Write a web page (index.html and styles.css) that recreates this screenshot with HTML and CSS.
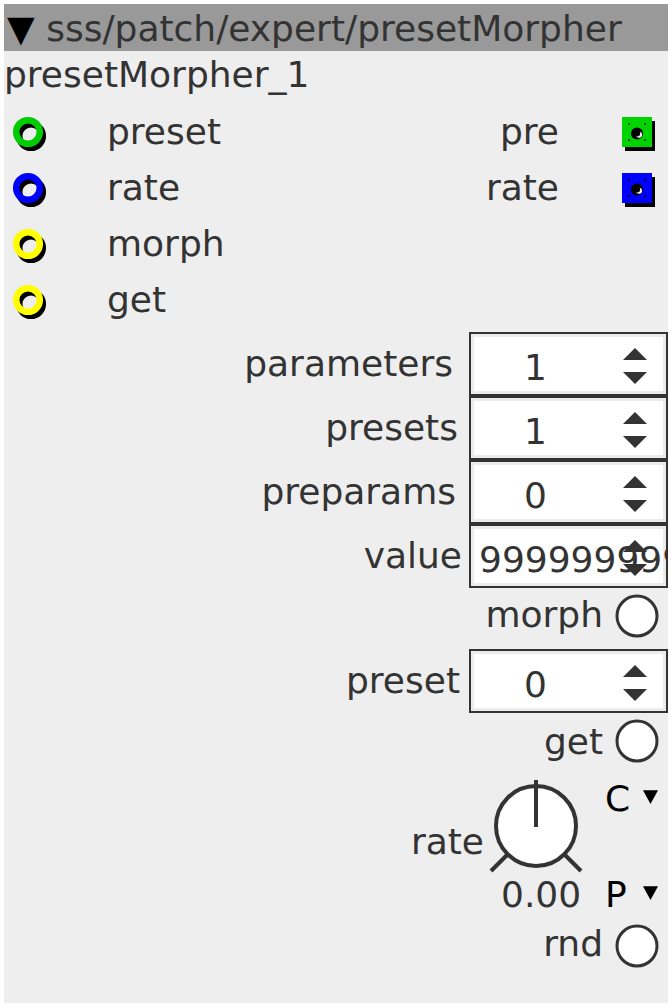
FILE: index.html
```html
<!DOCTYPE html>
<html>
<head>
<meta charset="utf-8">
<link rel="stylesheet" href="styles.css">
</head>
<body>
<div class="panel">
  <div class="title"><span class="tri">▼</span> sss/patch/expert/presetMorpher</div>
  <div class="name">presetMorpher_1</div>

  <div class="ports">
    <div class="inlets">
      <div class="port">
        <svg class="inlet" viewBox="0 0 36 38"><circle cx="18" cy="22" r="11.8" fill="none" stroke="#000" stroke-width="6.5"/><circle cx="15" cy="18" r="11.8" fill="none" stroke="#00cc00" stroke-width="6.5"/></svg>
        <span class="plabel">preset</span>
      </div>
      <div class="port">
        <svg class="inlet" viewBox="0 0 36 38"><circle cx="18" cy="22" r="11.8" fill="none" stroke="#000" stroke-width="6.5"/><circle cx="15" cy="18" r="11.8" fill="none" stroke="#0000ff" stroke-width="6.5"/></svg>
        <span class="plabel">rate</span>
      </div>
      <div class="port">
        <svg class="inlet" viewBox="0 0 36 38"><circle cx="18" cy="22" r="11.8" fill="none" stroke="#000" stroke-width="6.5"/><circle cx="15" cy="18" r="11.8" fill="none" stroke="#ffff00" stroke-width="6.5"/></svg>
        <span class="plabel">morph</span>
      </div>
      <div class="port">
        <svg class="inlet" viewBox="0 0 36 38"><circle cx="18" cy="22" r="11.8" fill="none" stroke="#000" stroke-width="6.5"/><circle cx="15" cy="18" r="11.8" fill="none" stroke="#ffff00" stroke-width="6.5"/></svg>
        <span class="plabel">get</span>
      </div>
    </div>

    <div class="outlets">
      <div class="port">
        <span class="olabel">pre</span>
        <svg class="outlet" viewBox="0 0 40 40">
          <rect x="5" y="7" width="30" height="30" fill="#000"/>
          <rect x="2" y="3" width="30" height="30" fill="#00d400"/>
          <g fill="#224422"><rect x="8" y="9" width="2" height="2"/><rect x="24" y="9" width="2" height="2"/><rect x="8" y="25" width="2" height="2"/><rect x="24" y="25" width="2" height="2"/></g>
          <circle cx="17" cy="19.5" r="6" fill="#000"/>
          <circle cx="19" cy="20.8" r="3" fill="#fff"/>
          <circle cx="17.4" cy="19.6" r="2.8" fill="#000"/>
        </svg>
      </div>
      <div class="port">
        <span class="olabel">rate</span>
        <svg class="outlet" viewBox="0 0 40 40">
          <rect x="5" y="7" width="30" height="30" fill="#000"/>
          <rect x="2" y="3" width="30" height="30" fill="#0000ff"/>
          <g fill="#000033"><rect x="8" y="9" width="2" height="2"/><rect x="24" y="9" width="2" height="2"/><rect x="8" y="25" width="2" height="2"/><rect x="24" y="25" width="2" height="2"/></g>
          <circle cx="17" cy="19.5" r="6" fill="#000"/>
          <circle cx="19" cy="20.8" r="3" fill="#fff"/>
          <circle cx="17.4" cy="19.6" r="2.8" fill="#000"/>
        </svg>
      </div>
    </div>
  </div>

  <div class="controls">
    <div class="numrow">
      <span class="clabel gap16">parameters</span>
      <div class="box"><span class="num">1</span><svg class="spin" viewBox="0 0 24 36"><polygon points="12,0 24,12 0,12"/><polygon points="0,24 24,24 12,36"/></svg></div>
    </div>
    <div class="numrow">
      <span class="clabel gap11">presets</span>
      <div class="box"><span class="num">1</span><svg class="spin" viewBox="0 0 24 36"><polygon points="12,0 24,12 0,12"/><polygon points="0,24 24,24 12,36"/></svg></div>
    </div>
    <div class="numrow">
      <span class="clabel gap13">preparams</span>
      <div class="box"><span class="num">0</span><svg class="spin" viewBox="0 0 24 36"><polygon points="12,0 24,12 0,12"/><polygon points="0,24 24,24 12,36"/></svg></div>
    </div>
    <div class="numrow">
      <span class="clabel gap7">value</span>
      <div class="box"><span class="num num-left">999999999</span><svg class="spin" viewBox="0 0 24 36"><polygon points="12,0 24,12 0,12"/><polygon points="0,24 24,24 12,36"/></svg></div>
    </div>

    <div class="btnrow row-morph">
      <span class="blabel">morph</span>
      <svg class="btn" viewBox="0 0 44 44"><circle cx="22" cy="22" r="20" fill="#fff" stroke="#333" stroke-width="3"/></svg>
    </div>

    <div class="numrow row-preset">
      <span class="clabel gap9">preset</span>
      <div class="box"><span class="num">0</span><svg class="spin" viewBox="0 0 24 36"><polygon points="12,0 24,12 0,12"/><polygon points="0,24 24,24 12,36"/></svg></div>
    </div>

    <div class="btnrow row-get">
      <span class="blabel lower">get</span>
      <svg class="btn" viewBox="0 0 44 44"><circle cx="22" cy="22" r="20" fill="#fff" stroke="#333" stroke-width="3"/></svg>
    </div>

    <div class="knobrow">
      <span class="klabel">rate</span>
      <div class="kcol">
        <svg class="knob" viewBox="0 0 96 96">
          <line x1="3" y1="93" x2="19" y2="77" stroke="#333" stroke-width="4"/>
          <line x1="77" y1="77" x2="93" y2="93" stroke="#333" stroke-width="4"/>
          <circle cx="48" cy="48" r="40" fill="#fff" stroke="#333" stroke-width="4"/>
          <line x1="48" y1="2" x2="48" y2="49" stroke="#333" stroke-width="4"/>
        </svg>
        <span class="kval">0.00</span>
      </div>
      <div class="cp">
        <div class="cpline"><span class="cpletter">C</span><svg class="drop" viewBox="0 0 12 11"><polygon points="0,0 12,0 6,11"/></svg></div>
        <div class="cpline second"><span class="cpletter">P</span><svg class="drop" viewBox="0 0 12 11"><polygon points="0,0 12,0 6,11"/></svg></div>
      </div>
    </div>

    <div class="btnrow row-rnd">
      <span class="blabel">rnd</span>
      <svg class="btn down1" viewBox="0 0 44 44"><circle cx="22" cy="22" r="20" fill="#fff" stroke="#333" stroke-width="3"/></svg>
    </div>
  </div>
</div>
</body>
</html>
```

FILE: styles.css
```css
* { box-sizing: border-box; }

body {
  margin: 0;
  background: #fff;
  font-family: "DejaVu Sans", sans-serif;
  font-size: 36px;
  line-height: 42px;
  color: #333;
}

.panel {
  margin: 4px 0 0 4px;
  width: 664px;
  height: 999px;
  background: #eeeeee;
  display: flex;
  flex-direction: column;
}

.title {
  height: 47px;
  padding: 4px 0 1px 3px;
  background: #999999;
  white-space: nowrap;
  color: #333;
}

.tri { color: #000; }

.name {
  height: 53px;
  padding: 3px 0 8px 0;
}

.ports {
  display: flex;
  justify-content: space-between;
}

.inlets, .outlets {
  display: flex;
  flex-direction: column;
}

.outlets { align-items: flex-end; }

.port {
  display: flex;
  align-items: flex-start;
  height: 56px;
}

.inlet {
  flex: none;
  width: 36px;
  height: 38px;
  margin: 10px 0 0 9px;
}

.plabel { margin: 7px 0 0 58px; }

.olabel { margin-top: 7px; }

.outlet {
  flex: none;
  width: 40px;
  height: 40px;
  margin: 10px 8px 0 61px;
}

.controls {
  margin-top: 4px;
  display: flex;
  flex-direction: column;
  align-items: flex-end;
}

.numrow {
  display: flex;
  align-items: center;
}

.gap16 { margin-right: 16px; }
.gap13 { margin-right: 13px; }
.gap11 { margin-right: 11px; }
.gap9 { margin-right: 9px; }
.gap7 { margin-right: 7px; }

.box {
  width: 199px;
  height: 64px;
  border: 2px solid #333;
  background: #fff;
  box-shadow: inset 0 0 0 3px #ececec;
  display: flex;
  align-items: flex-start;
  overflow: hidden;
}

.num {
  flex: none;
  width: 129px;
  padding-top: 13px;
  text-align: center;
  white-space: nowrap;
}

.num-left {
  text-align: left;
  padding-left: 8px;
  overflow: visible;
}

.spin {
  flex: none;
  width: 24px;
  height: 36px;
  margin: 14px 0 0 23px;
  fill: #333;
}

.btnrow {
  display: flex;
  align-items: flex-start;
  height: 44px;
  margin-right: 9px;
}

.btn {
  flex: none;
  width: 44px;
  height: 44px;
  margin-left: 12px;
}

.row-morph { margin-top: 6px; }
.row-preset { margin-top: 11px; }
.row-get { margin-top: 6px; }
.row-rnd { margin-top: 7px; }

.lower { margin-top: 2px; }
.down1 { margin-top: 1px; }

.knobrow {
  margin-top: 15px;
  margin-right: 10px;
  display: flex;
  align-items: flex-start;
}

.klabel {
  margin: 43px 4px 0 0;
}

.kcol {
  display: flex;
  flex-direction: column;
  align-items: flex-start;
  width: 96px;
}

.knob {
  width: 96px;
  height: 96px;
}

.kval { margin-left: 13px; }

.cp {
  margin-left: 21px;
  display: flex;
  flex-direction: column;
  color: #000;
}

.cpline {
  display: flex;
  align-items: flex-start;
  height: 42px;
}

.cpline.second { margin-top: 54px; }

.cpletter {
  display: inline-block;
  width: 38px;
}

.drop {
  width: 15px;
  height: 14px;
  margin-top: 12px;
  fill: #000;
}
```
